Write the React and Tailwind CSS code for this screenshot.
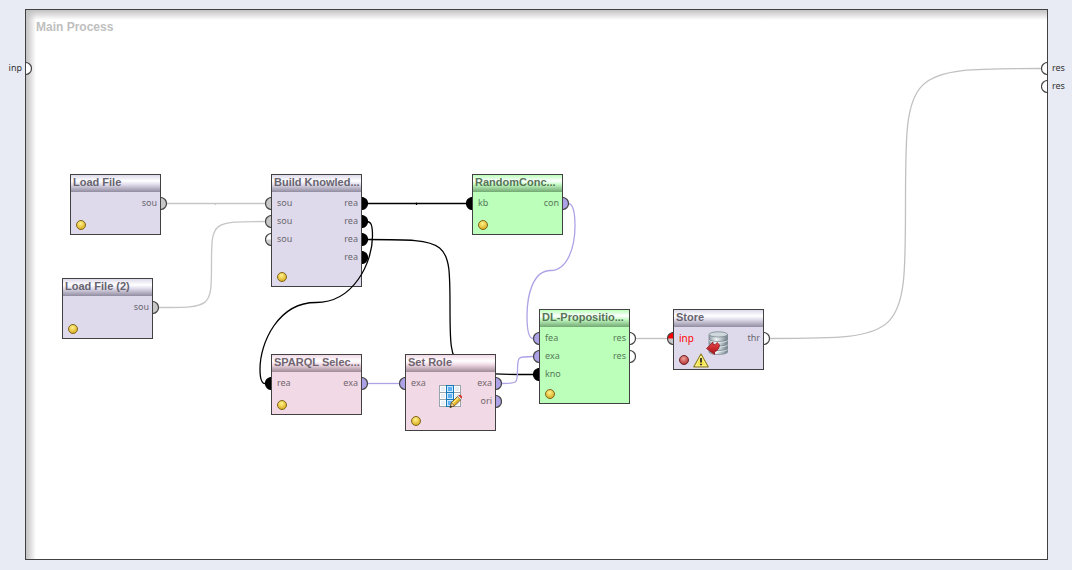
import clsx from "clsx";

const THEMES = {
    lavender: {
        body: "bg-[#dedaeb]",
        title: "bg-[linear-gradient(#dedaeb,#ffffff_35%,#e2deed_55%,#918ca0)] text-[#67646f]",
        label: "text-[#6a6870]",
    },
    green: {
        body: "bg-[#bbffbb]",
        title: "bg-[linear-gradient(#bbffbb,#ffffff_35%,#c4fcc4_55%,#72a872)] text-[#587358]",
        label: "text-[#587a58]",
    },
    pink: {
        body: "bg-[#f1d9e6]",
        title: "bg-[linear-gradient(#f1d9e6,#ffffff_35%,#f2dde8_55%,#9f8a95)] text-[#706570]",
        label: "text-[#73676d]",
    },
};

const GRAY = "#c8c8c8";
const VIOLET = "#aea2e6";

const knowledgeBase = {
    title: "Build Knowled...",
    theme: "lavender",
    x: 271,
    y: 174,
    rows: [
        { in: "sou", inFill: GRAY, out: "rea", outFill: "#000" },
        { in: "sou", inFill: GRAY, out: "rea", outFill: "#000" },
        { in: "sou", inFill: "#fff", inHalf: "#cfcfcf", out: "rea", outFill: "#000" },
        { out: "rea", outFill: "#000" },
    ],
};

const operators = [
    { title: "Load File", theme: "lavender", x: 70, y: 174, rows: [{ out: "sou", outFill: GRAY }] },
    { title: "Load File (2)", theme: "lavender", x: 62, y: 278, rows: [{ out: "sou", outFill: GRAY }] },
    {
        title: "RandomConc...",
        theme: "green",
        x: 472,
        y: 174,
        rows: [{ in: "kb", inFill: "#000", out: "con", outFill: VIOLET }],
    },
    {
        title: "SPARQL Selec...",
        theme: "pink",
        x: 271,
        y: 354,
        rows: [{ in: "rea", inFill: "#000", out: "exa", outFill: VIOLET }],
    },
    {
        title: "Set Role",
        theme: "pink",
        x: 405,
        y: 354,
        icon: TableIcon,
        rows: [
            { in: "exa", inFill: VIOLET, out: "exa", outFill: VIOLET },
            { out: "ori", outFill: VIOLET },
        ],
    },
    {
        title: "DL-Propositio...",
        theme: "green",
        x: 539,
        y: 309,
        rows: [
            { in: "fea", inFill: VIOLET, out: "res", outFill: "#fff" },
            { in: "exa", inFill: VIOLET, out: "res", outFill: "#fff" },
            { in: "kno", inFill: "#000" },
        ],
    },
    {
        title: "Store",
        theme: "lavender",
        x: 673,
        y: 309,
        icon: DatabaseIcon,
        error: true,
        rows: [{ in: "inp", inFill: "#f00", inHalf: "#c8c8c8", inError: true, out: "thr", outFill: "#fff" }],
    },
];

const wires = [
    { color: "#c6c6c6", d: "M167 203.5H265M215.5 203V205" },
    { color: "#c6c6c6", d: "M159 307.5C211.5 307.5 211.5 307.5 211.5 264.5C211.5 221.5 211.5 221.5 265 221.5" },
    { color: "#000", d: "M367 203.5H467M416.5 202.5V205" },
    { color: "#000", d: "M367 239.5C450 239.5 450 239.5 450 307C450 374.5 450 374.5 533 374.5" },
    {
        color: "#000",
        d: "M367 221.5C371 221.5 372.5 225 372.5 236C372.5 262 354 302.5 316 302.5C278 302.5 260 343 260 369C260 380 262 383.5 265 383.5",
    },
    {
        color: VIOLET,
        d: "M568 203.5C572 203.5 575 209 575 226C575 246 568 270.5 550.5 270.5C533 270.5 527 295 527 316C527 332 529 338.5 533 338.5",
    },
    { color: VIOLET, d: "M368 383.5H399" },
    { color: VIOLET, d: "M502 383.5C517.5 383.5 517.5 383.5 517.5 370C517.5 356.5 517.5 356.5 533 356.5" },
    { color: "#c0c0c0", d: "M636 338.5H667" },
    { color: "#c0c0c0", d: "M769 338.5C905.5 338.5 905.5 338.5 905.5 203.5C905.5 68.5 905.5 68.5 1041 68.5" },
];

function TableIcon() {
    return (<svg className="size-6" viewBox="0 0 24 24" aria-hidden>
      <rect x="1" y="1" width="22" height="22" fill="#98a5ad"/>
      {[2, 9, 16].map((y) => (<g key={y}>
          <rect x="2" y={y} width="6" height="6" fill="#fff"/>
          <rect x="3" y={y + 1} width="4" height="4" fill="#e8eff4"/>
          <rect x="16" y={y} width="6" height="6" fill="#fff"/>
          <rect x="17" y={y + 1} width="4" height="4" fill="#e8eff4"/>
        </g>))}
      <rect x="8" y="1" width="8" height="22" fill="#1678b8"/>
      {[2, 9, 16].map((y) => (<g key={y}>
          <rect x="9" y={y} width="6" height="6" fill="#c9e8ff"/>
          <rect x="10" y={y + 1} width="4" height="4" fill="#62b1f3"/>
        </g>))}
      <path d="M12 23.5L13.5 18.5L19.5 12.5L23 15.5L16.5 21.8Z" fill="#e5b62b" stroke="#6b4b14" strokeWidth="0.8"/>
      <path d="M14.5 19.5L20.3 13.8" stroke="#ffe98a" strokeWidth="1.2"/>
      <path d="M12 23.5L13.5 18.7L16.3 21.7Z" fill="#f0d5a8" stroke="#6b4b14" strokeWidth="0.6"/>
      <path d="M12 23.5L12.7 21.2L14.2 22.7Z" fill="#222"/>
      <path d="M19.4 12.6L20.4 11.6L23.8 14.7L22.8 15.7Z" fill="#e8e8e8" stroke="#777" strokeWidth="0.5"/>
      <path d="M20.4 11.6Q22 10.2 23.4 11.5Q24.6 13 23.7 14.6Z" fill="#d9342b"/>
    </svg>);
}

function DatabaseIcon() {
    return (<svg className="size-6" viewBox="0 0 24 24" aria-hidden>
      <defs>
        <linearGradient id="drum">
          <stop offset="0" stopColor="#8d9ba3"/>
          <stop offset="0.4" stopColor="#f1f5f7"/>
          <stop offset="1" stopColor="#70808a"/>
        </linearGradient>
        <linearGradient id="arrow" x2="0" y2="1">
          <stop offset="0" stopColor="#e8484a"/>
          <stop offset="1" stopColor="#a80f17"/>
        </linearGradient>
      </defs>
      <path d="M3 3.5V21C3 24.2 21.5 24.2 21.5 21V3.5Z" fill="url(#drum)" stroke="#7a8890" strokeWidth="0.8"/>
      <ellipse cx="12.3" cy="3.4" rx="9.2" ry="2.6" fill="#cfd8dd" stroke="#7a8890" strokeWidth="0.8"/>
      <path d="M3 8.5C5 11.2 19.5 11.2 21.5 8.5M3 13C5 15.7 19.5 15.7 21.5 13M3 17.5C5 20.2 19.5 20.2 21.5 17.5" fill="none" stroke="#6f7e87" strokeWidth="0.8"/>
      <path d="M3 9.4C5 12.1 19.5 12.1 21.5 9.4M3 13.9C5 16.6 19.5 16.6 21.5 13.9M3 18.4C5 21.1 19.5 21.1 21.5 18.4" fill="none" stroke="#f4f8fa" strokeWidth="0.7"/>
      <path d="M0.5 17.5L7 11V13.5Q9 14.8 11.2 11.5L13.5 14Q13 19.5 8.5 20.8V23.5Z" fill="url(#arrow)" stroke="#8b1016" strokeWidth="0.7"/>
    </svg>);
}

function StatusLight({ error }) {
    return (<svg className="size-[10px]" viewBox="0 0 10 10" aria-hidden>
      <defs>
        <radialGradient id={error ? "light-red" : "light-yellow"} cx="0.45" cy="0.35" r="0.6">
          <stop offset="0" stopColor={error ? "#f0a09c" : "#fff38c"}/>
          <stop offset="1" stopColor={error ? "#b83a36" : "#dcae22"}/>
        </radialGradient>
      </defs>
      <circle cx="5" cy="5" r="4.5" fill={error ? "url(#light-red)" : "url(#light-yellow)"} stroke={error ? "#6e2a2c" : "#7f671f"}/>
    </svg>);
}

function WarningIcon() {
    return (<svg className="h-[15px] w-4" viewBox="0 0 16 15" aria-hidden>
      <path d="M8 1L15.2 13.8H0.8Z" fill="#f6e64a" stroke="#8f7f20" strokeLinejoin="round" strokeWidth="1.2"/>
      <path d="M8 3L13.4 12.8H2.6Z" fill="none" stroke="#fffbb0" strokeWidth="0.7"/>
      <path d="M8 5V9.5M8 10.7V12.2" stroke="#222" strokeWidth="1.7"/>
    </svg>);
}

// Half circle that sticks out of the edge of an operator or of the process.
function Port({ side, fill, half }) {
    const left = side === "left";
    const cx = left ? 6.5 : -0.5;
    const edge = left ? 0 : 1;
    const arc = `M${cx} 0.5A6 6 0 0 ${edge} ${cx} 12.5`;
    return (<svg className={clsx("absolute top-[3px] h-[13px] w-[6px]", left ? "left-[-7px]" : "right-[-7px]")} viewBox="0 0 6 13" aria-hidden>
      <path d={arc} fill={fill}/>
      {half ? <path d={`M${cx} 6.5H${cx - 6}A6 6 0 0 0 ${cx} 12.5Z`} fill={half}/> : null}
      <path d={arc} fill="none" stroke={fill === "#000" ? "#000" : "#464646"} strokeWidth="1.2"/>
    </svg>);
}

function Operator({ title, theme, x, y, rows, icon: Icon, error }) {
    const colors = THEMES[theme];
    return (<section className={clsx("absolute flex min-h-[61px] w-[91px] flex-col border border-[#414141]", colors.body)} style={{ left: x, top: y }}>
      <h2 className={clsx("h-[17px] pl-[2px] font-['Liberation_Sans',sans-serif] text-[11px] leading-[15px] font-bold whitespace-nowrap", colors.title)}>
        {title}
      </h2>
      {Icon ? (<div className="absolute top-1.5 right-0.5 bottom-0 left-0 flex items-center justify-center">
          <Icon />
        </div>) : null}
      <ul className={clsx("pt-[2px] text-[9px] leading-[18px]", colors.label)}>
        {rows.map((row, index) => (<li key={index} className="relative flex h-[18px] justify-between pr-[3px] pl-[5px]">
            {row.in ? <Port side="left" fill={row.inFill} half={row.inHalf}/> : null}
            <span className={clsx(row.inError && "text-[10px] text-[#ff0000]")}>{row.in}</span>
            <span>{row.out}</span>
            {row.out ? <Port side="right" fill={row.outFill}/> : null}
          </li>))}
      </ul>
      <div className="mt-auto flex h-5 items-center gap-1 pt-[2px] pl-[5px]">
        <StatusLight error={error}/>
        {error ? <WarningIcon /> : null}
      </div>
    </section>);
}

export default function App() {
    return (<div className="relative flex min-h-screen overflow-hidden bg-[#e8ebf3] font-['Noto_Sans',sans-serif]">
      <div className="z-10 w-[25px] shrink-0 pt-[59px] text-[9px] leading-[18px] text-[#333]">
        <div className="relative h-[18px] pr-[3px] text-right">
          inp
          <Port side="right" fill="#fff"/>
        </div>
      </div>
      <main className="mt-[9px] mb-[10px] flex-1 border border-[#414141] bg-white bg-[linear-gradient(to_right,#c2c2c2,#ffffff00_10px),linear-gradient(#c2c2c2,#ffffff_10px)] px-[10px] pt-[9px]">
        <h1 className="font-['Liberation_Sans',sans-serif] text-xs font-bold text-[#c0c0c0]">Main Process</h1>
      </main>
      <div className="z-10 w-6 shrink-0 pt-[59px] text-[9px] leading-[18px] text-[#333]">
        {["first", "second"].map((key) => (<div key={key} className="relative h-[18px] pl-1">
            res
            <Port side="left" fill="#fff"/>
          </div>))}
      </div>
      <Operator {...knowledgeBase}/>
      <svg className="absolute top-0 left-0 h-[570px] w-[1072px]" viewBox="0 0 1072 570" fill="none" aria-hidden>
        {wires.map((wire) => (<path key={wire.d} d={wire.d} stroke={wire.color} strokeWidth="1.3"/>))}
      </svg>
      {operators.map((operator) => (<Operator key={operator.title} {...operator}/>))}
    </div>);
}
